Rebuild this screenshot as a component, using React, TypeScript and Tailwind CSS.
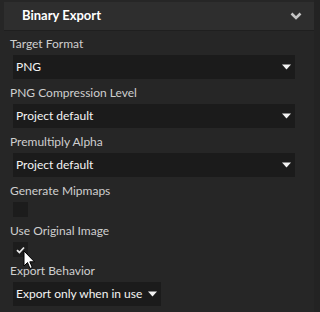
import React from "react";

const font = { fontFamily: "Lato, 'Open Sans', sans-serif" };

function Caret() {
  return (
    <svg width="9" height="6" viewBox="0 0 9 6" className="shrink-0">
      <path d="M0 0.5 H9 L4.5 5.5 Z" fill="#f2f2f2" />
    </svg>
  );
}

function Select({ value, wide = true }: { value: string; wide?: boolean }) {
  return (
    <div
      className={`ml-[13px] flex h-6 items-center justify-between whitespace-nowrap bg-[#1b1b1b] pl-[3px] pr-[4px] text-[12px] text-[#f4f4f4] ${
        wide ? "w-[282px]" : "w-[148px]"
      }`}
    >
      <span>{value}</span>
      <Caret />
    </div>
  );
}

function Label({ text }: { text: string }) {
  return (
    <div className="flex h-[25px] items-center whitespace-nowrap pl-[10px] pt-[3px] text-[12px] text-[#cfcfcf]">
      {text}
    </div>
  );
}

function Check({ checked }: { checked?: boolean }) {
  return (
    <div className="ml-[13px] flex h-[15px] w-[15px] items-center justify-center bg-[#1c1c1c]">
      {checked ? (
        <svg width="9" height="8" viewBox="0 0 9 8">
          <path d="M1 4.2 L3.4 6.5 L8 1.5" stroke="#e6e6e6" strokeWidth="1.8" fill="none" />
        </svg>
      ) : null}
    </div>
  );
}

export default function App() {
  return (
    <div className="relative flex h-[312px] w-[320px] bg-[#232323]" style={font}>
      <div className="w-[314px] bg-[#262626] pt-[2px]">
        <div className="ml-1 flex h-[29px] w-[310px] items-center justify-between border-b border-[#1f1f1f] bg-[#2e2e2e] pl-[18px] pr-[12px]">
          <span className="text-[13px] font-bold text-white">Binary Export</span>
          <svg width="12" height="8" viewBox="0 0 12 8">
            <path d="M1.5 1.5 L6 6 L10.5 1.5" stroke="#c4c4c4" strokeWidth="2.6" fill="none" />
          </svg>
        </div>
        <div className="mt-[-1px]">
          <Label text="Target Format" />
          <Select value="PNG" />
          <Label text="PNG Compression Level" />
          <Select value="Project default" />
          <Label text="Premultiply Alpha" />
          <Select value="Project default" />
          <Label text="Generate Mipmaps" />
          <Check />
          <Label text="Use Original Image" />
          <Check checked />
          <Label text="Export Behavior" />
          <Select value="Export only when in use" wide={false} />
        </div>
      </div>
      <svg
        className="absolute left-[23px] top-[250px]"
        width="13"
        height="20"
        viewBox="0 0 13 20"
      >
        <path
          d="M1 1 L1 16 L4.5 12.5 L7 18.5 L9.3 17.5 L6.8 11.8 L11.5 11.8 Z"
          fill="#ffffff"
          stroke="#000000"
          strokeWidth="1"
        />
      </svg>
    </div>
  );
}
